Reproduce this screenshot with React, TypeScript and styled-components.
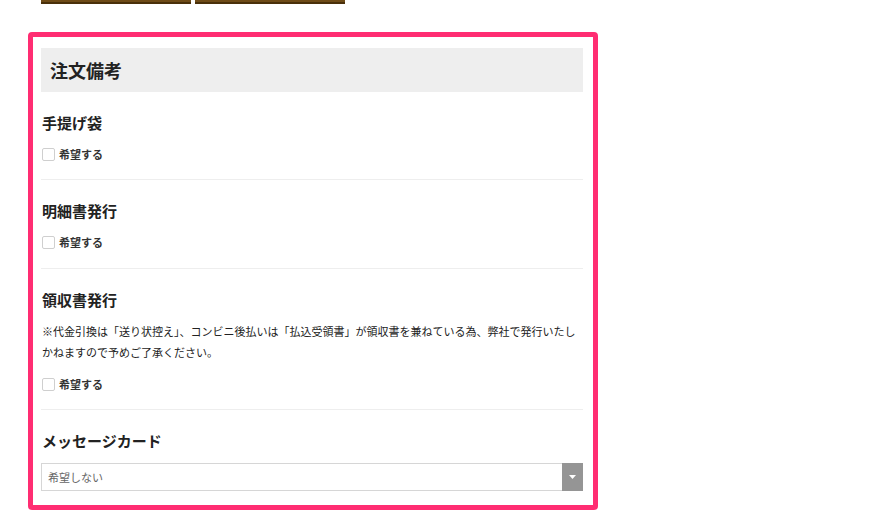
import React from "react";
import styled, { createGlobalStyle } from "styled-components";

const Global = createGlobalStyle`
  html, body { margin: 0; padding: 0; background: #fff; }
  body { font-family: "Noto Sans CJK JP", "Noto Sans", sans-serif; color: #222; }
`;

const Page = styled.div`
  padding: 0 0 0 28px;
  width: 570px;
`;

const ButtonRow = styled.div`
  display: flex;
  gap: 4px;
  padding-left: 13px;
  height: 32px;
  align-items: flex-start;
`;

const CutButton = styled.div`
  width: 150px;
  height: 2px;
  background: #6e4b17;
  border-bottom: 2px solid #4a300a;
`;

const Box = styled.div`
  border: 5px solid #ff2d72;
  border-radius: 4px;
  padding: 11px 10px 14px 8px;
`;

const Header = styled.div`
  height: 44px;
  background: #eeeeee;
  display: flex;
  align-items: center;
  padding-left: 9px;
  font-size: 18px;
  font-weight: 700;
  color: #222;
`;

const Section = styled.div<{ $last?: boolean; $pb?: number }>`
  padding: 19px 0 ${(p) => (p.$last ? 0 : p.$pb ?? 16)}px 0;
  border-bottom: ${(p) => (p.$last ? "none" : "1px solid #eeeeee")};
`;

const Heading = styled.div`
  font-size: 15px;
  font-weight: 700;
  line-height: 24px;
  color: #222;
  padding-left: 1px;
`;

const Note = styled.p`
  margin: 9px 0 0 1px;
  font-size: 11px;
  line-height: 21px;
  color: #222;
`;

const CheckRow = styled.label<{ $gap: number }>`
  display: flex;
  align-items: center;
  gap: 4px;
  height: 20px;
  margin-top: ${(p) => p.$gap}px;
  padding-left: 1px;
  font-size: 11px;
  font-weight: 700;
  color: #333;
`;

const Box13 = styled.span`
  width: 11px;
  height: 11px;
  border: 1px solid #cfcfcf;
  border-radius: 2px;
  background: #fff;
`;

const Select = styled.div`
  margin-top: 10px;
  height: 26px;
  border: 1px solid #d6d6d6;
  display: flex;
  align-items: stretch;
`;

const SelectText = styled.div`
  flex: 1;
  display: flex;
  align-items: center;
  padding-left: 6px;
  font-size: 11px;
  color: #666;
`;

const Arrow = styled.div`
  width: 21px;
  background: #959595;
  display: flex;
  align-items: center;
  justify-content: center;
  margin: -1px -1px -1px 0;
`;

const Check = ({ gap }: { gap: number }) => (
  <CheckRow $gap={gap}>
    <Box13 />
    希望する
  </CheckRow>
);

export default function App() {
  return (
    <>
      <Global />
      <Page>
        <ButtonRow>
          <CutButton />
          <CutButton />
        </ButtonRow>
        <Box>
          <Header>注文備考</Header>
          <Section $pb={15}>
            <Heading>手提げ袋</Heading>
            <Check gap={9} />
          </Section>
          <Section>
            <Heading>明細書発行</Heading>
            <Check gap={9} />
          </Section>
          <Section $pb={15}>
            <Heading>領収書発行</Heading>
            <Note>
              ※代金引換は「送り状控え」、コンビニ後払いは「払込受領書」が領収書を兼ねている為、弊社で発行いたしかねますので予めご了承ください。
            </Note>
            <Check gap={11} />
          </Section>
          <Section $last>
            <Heading>メッセージカード</Heading>
            <Select>
              <SelectText>希望しない</SelectText>
              <Arrow>
                <svg width="7" height="4" viewBox="0 0 7 4">
                  <path d="M0 0 L7 0 L3.5 4 Z" fill="#fff" />
                </svg>
              </Arrow>
            </Select>
          </Section>
        </Box>
      </Page>
    </>
  );
}
